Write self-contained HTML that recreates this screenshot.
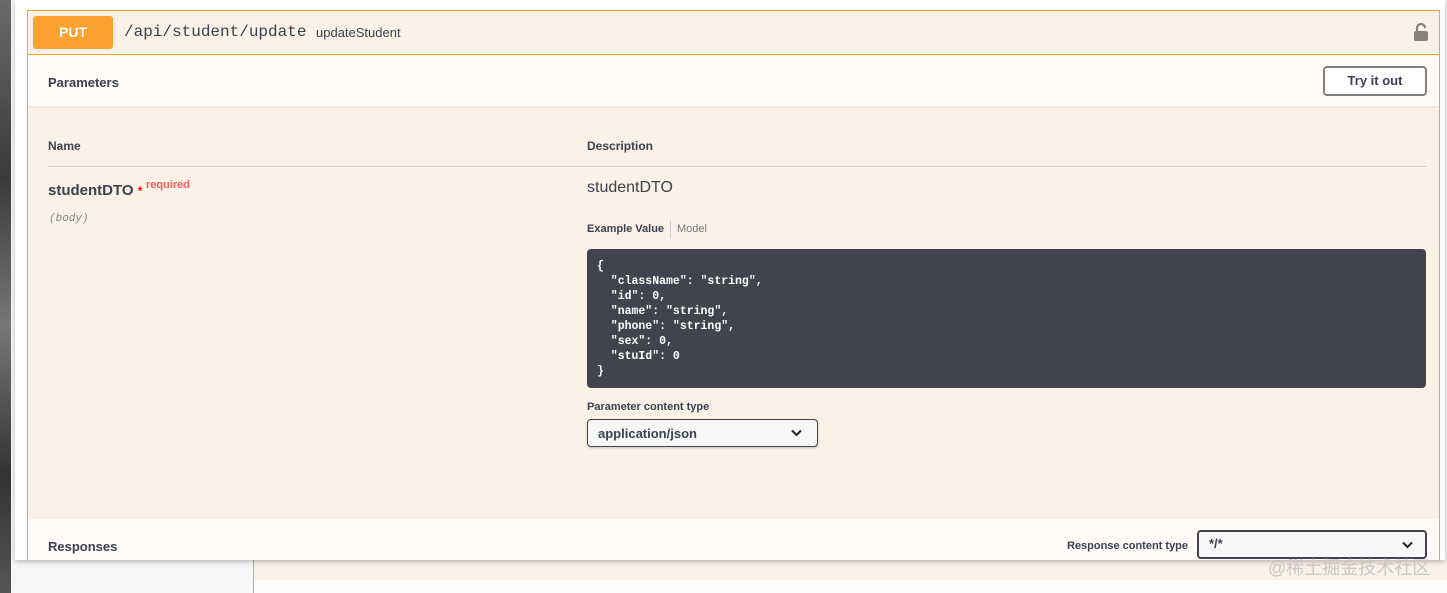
<!DOCTYPE html>
<html><head><style>
*{box-sizing:border-box;margin:0;padding:0}
body{width:1447px;height:593px;overflow:hidden;background:#f7f7f7;position:relative;font-family:"Liberation Sans",sans-serif;color:#3b4151}
.abs{position:absolute}
</style></head><body>
<div class="abs" style="left:0;top:0;width:11px;height:593px;background:linear-gradient(180deg,#6a6a6a,#3a3a3a 30%,#777 55%,#333 80%,#555)"></div>
<div class="abs" style="left:253px;top:560px;width:1194px;height:20px;background:#fbf1e6;border-left:1px solid #fca130"></div>
<div class="abs" style="left:253px;top:580px;width:1194px;height:13px;background:#fefcfa;border-left:1px solid #fca130"></div>
<div class="abs" style="left:1268px;top:554px;font-size:18px;color:#c8c8c8;font-family:'Liberation Sans','Noto Sans CJK SC',sans-serif;z-index:5">@稀土掘金技术社区</div>
<div class="abs" style="left:15px;top:0;width:1430px;height:560px;background:#fff;box-shadow:0 2px 5px rgba(0,0,0,.25);overflow:hidden">
 <div class="abs" style="left:12px;top:10px;width:1413px;height:560px;border:1px solid #fca130;border-bottom:none;background:#fbf1e6;overflow:hidden">
  <div class="abs" style="left:0;top:0;width:100%;height:44px;border-bottom:1px solid #fca130">
   <div class="abs" style="left:5px;top:5px;width:80px;height:33px;background:#fca130;border-radius:3px;color:#fff;font-weight:bold;font-size:14px;text-align:center;line-height:33px">PUT</div>
   <div class="abs" style="left:96px;top:12px;font-family:'Liberation Mono',monospace;font-size:16px;color:#3b4151">/api/student/update</div>
   <div class="abs" style="left:288px;top:14px;font-size:13px;color:#3b4151">updateStudent</div>
   <svg class="abs" style="left:1385px;top:11px" width="16" height="20" viewBox="0 0 16 20"><path d="M4 9V6a4 4 0 0 1 8 0" fill="none" stroke="#8b7f7a" stroke-width="2.2"/><rect x="1" y="9" width="14" height="10" rx="2" fill="#8b7f7a"/></svg>
  </div>
  <div class="abs" style="left:0;top:44px;width:100%;height:51px;background:#fefbf8;box-shadow:0 1px 2px rgba(0,0,0,.08)">
   <div class="abs" style="left:20px;top:20px;font-size:13px;font-weight:bold">Parameters</div>
   <div class="abs" style="left:1295px;top:11px;width:104px;height:30px;border:2px solid #808080;border-radius:4px;font-size:13px;font-weight:bold;text-align:center;line-height:26px;background:#fff">Try it out</div>
  </div>
  <div class="abs" style="left:20px;top:128px;font-size:12px;font-weight:bold">Name</div>
  <div class="abs" style="left:559px;top:128px;font-size:12px;font-weight:bold">Description</div>
  <div class="abs" style="left:20px;top:155px;width:1379px;height:1px;background:#d8d0c8"></div>
  <div class="abs" style="left:20px;top:171px;font-size:15px;font-weight:bold">studentDTO <span style="color:#f00;font-size:12px">*</span></div>
  <div class="abs" style="left:118px;top:168px;font-size:11px;color:#f06060;font-weight:bold">required</div>
  <div class="abs" style="left:21px;top:202px;font-size:11px;font-style:italic;color:#888;font-family:'Liberation Mono',monospace">(body)</div>
  <div class="abs" style="left:559px;top:168px;font-size:16px;color:#3b4151">studentDTO</div>
  <div class="abs" style="left:559px;top:212px;font-size:11px;font-weight:bold">Example Value</div>
  <div class="abs" style="left:642px;top:210px;width:1px;height:17px;background:#ccc"></div>
  <div class="abs" style="left:649px;top:212px;font-size:11px;color:#777">Model</div>
  <div class="abs" style="left:559px;top:238px;width:839px;height:139px;background:#41444e;border-radius:4px;color:#fff;font-family:'Liberation Mono',monospace;font-weight:bold;font-size:11.5px;line-height:15px;padding:10px 10px;white-space:pre">{
  "className": "string",
  "id": 0,
  "name": "string",
  "phone": "string",
  "sex": 0,
  "stuId": 0
}</div>
  <div class="abs" style="left:559px;top:390px;font-size:11px;font-weight:bold">Parameter content type</div>
  <div class="abs" style="left:559px;top:408px;width:231px;height:28px;border:1px solid #41444e;border-radius:4px;background:#f7f7f7;box-shadow:0 1px 2px rgba(0,0,0,.2);font-size:13px;font-weight:bold;padding:6px 10px">application/json
   <svg class="abs" style="left:203px;top:9px" width="11" height="8" viewBox="0 0 11 8"><path d="M1 1.5l4.5 4.5 4.5-4.5" fill="none" stroke="#222" stroke-width="2"/></svg></div>
  <div class="abs" style="left:0;top:508px;width:100%;height:60px;background:#fefbf8">
   <div class="abs" style="left:20px;top:20px;font-size:13px;font-weight:bold">Responses</div>
   <div class="abs" style="left:1039px;top:21px;font-size:11px;font-weight:bold">Response content type</div>
   <div class="abs" style="left:1169px;top:11px;width:230px;height:29px;border:2px solid #41444e;border-radius:4px;background:#f7f7f7;font-size:13px;font-weight:bold;padding:4px 10px">*/*
    <svg class="abs" style="left:203px;top:9px" width="11" height="8" viewBox="0 0 11 8"><path d="M1 1.5l4.5 4.5 4.5-4.5" fill="none" stroke="#222" stroke-width="2"/></svg></div>
  </div>
 </div>
</div>
</body></html>
